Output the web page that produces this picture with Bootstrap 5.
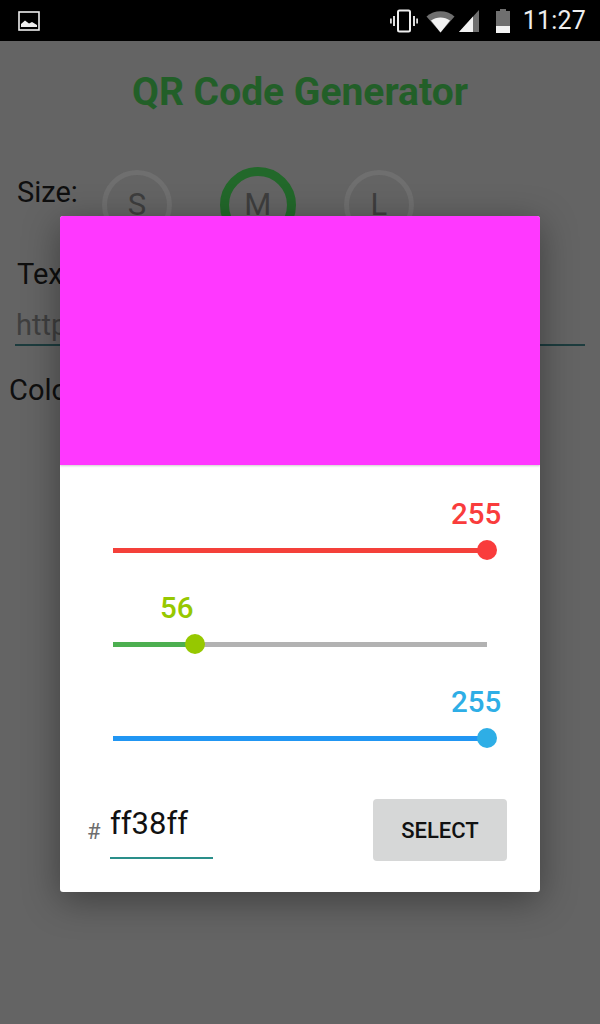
<!DOCTYPE html>
<html lang="en">
<head>
  <meta charset="UTF-8">
  <meta name="viewport" content="width=device-width, initial-scale=1.0">
  <title>QR Code Generator</title>
  <link href="https://cdn.jsdelivr.net/npm/bootstrap@5.3.3/dist/css/bootstrap.min.css" rel="stylesheet">
  <style>
    body { background: #646464; font-family: Roboto, sans-serif; width: 600px; height: 1024px; overflow: hidden; position: relative; }
    .status-bar { height: 41px; background: #000; color: #eee; padding: 0 14px 0 18px; font-size: 25px; }
    .status-time { line-height: 1; margin-left: 13px; letter-spacing: .2px; }
    .page-title { color: #225f28; font-size: 39px; font-weight: 700; line-height: 46px; margin: 28px 0 0; text-align: center; }
    .dim-label { color: #0f0f0f; font-size: 29px; line-height: 34px; }
    .size-row { padding: 52px 0 0 17px; height: 137px; }
    .size-dot { display: flex; align-items: center; justify-content: center; border-radius: 50%; color: #3e3e3e; font-size: 31px; flex: none; }
    .size-off { width: 70px; height: 70px; border: 5px solid #6f6f6f; }
    .size-on { width: 76px; height: 76px; border: 9px solid #22682a; }
    .text-label { padding: 0 0 0 17px; margin-top: 5px; }
    .text-field { margin: 16px 15px 0; padding-left: 1px; height: 37px; border-bottom: 2px solid #1d3c3e; color: #3f3f3f; font-size: 29px; line-height: 36px; box-sizing: content-box; }
    .color-label { padding-left: 9px; margin-top: 27px; }
    .picker { position: absolute; left: 60px; top: 216px; width: 480px; height: 676px; background: #fff; border: 0; border-radius: 3px; box-shadow: 0 8px 36px rgba(0,0,0,.38); overflow: hidden; }
    .swatch { height: 249px; background: #ff38ff; box-shadow: 0 1px 2px rgba(0,0,0,.2); }
    .sliders { padding: 29px 53px 0; }
    .slider-row { height: 94px; }
    .slider-value { font-size: 29.5px; line-height: 40px; font-weight: 500; height: 40px; margin-left: -10px; }
    .slider-track { height: 5px; background: #b2b2b2; border-radius: 0; overflow: visible; margin-top: 14px; width: 374px; position: relative; }
    .slider-thumb { position: absolute; top: -8px; width: 20px; height: 20px; margin-left: -10px; border-radius: 50%; }
    .hex-row { padding: 0 33px 0 27px; height: 62px; margin-top: 23px; }
    .hex-hash { color: #6e6e6e; font-size: 22px; width: 23px; padding-top: 2px; }
    .hex-field { width: 103px; height: 59px; border-bottom: 2px solid #2a8f8a; font-size: 31px; line-height: 52px; color: #111; box-sizing: content-box; margin-top: -1px; }
    .select-btn { width: 134px; height: 62px; padding: 0; background: #d6d7d7; border: 0; border-radius: 4px; color: #111; font-size: 22px; font-weight: 500; }
    .select-btn:hover { background: #d6d7d7; color: #111; }
  </style>
</head>
<body>

  <div class="status-bar d-flex align-items-center">
    <svg width="22" height="20" viewBox="0 0 22 20">
      <rect x="1" y="1" width="20" height="18" fill="none" stroke="#eee" stroke-width="1.6"/>
      <path d="M3 16 L3 13 L7 9.5 L11 12.5 L14 11 L19 14 L19 16 Z" fill="#eee"/>
    </svg>
    <div class="ms-auto d-flex align-items-center">
      <svg width="28" height="24" viewBox="0 0 28 24">
        <rect x="8" y="1.5" width="12" height="21" rx="1.5" fill="none" stroke="#eee" stroke-width="2"/>
        <path d="M4 7v10M0.8 9.5v5M24 7v10M27.2 9.5v5" stroke="#ddd" stroke-width="2" fill="none"/>
      </svg>
      <svg class="ms-2" width="29" height="24" viewBox="0 0 29 24">
        <path d="M0.5 7.5 C8 0.5 21 0.5 28.5 7.5 L14.5 23.5 Z" fill="#6f6f6f"/>
        <path d="M5 11.5 C10.5 7.5 18.5 7.5 24 11.5 L14.5 23.5 Z" fill="#f2f2f2"/>
      </svg>
      <svg class="ms-1" width="21" height="24" viewBox="0 0 21 24">
        <path d="M0 23 L20 1 L20 23 Z" fill="#6f6f6f"/>
        <path d="M0 23 L14 7.5 L14 23 Z" fill="#f2f2f2"/>
      </svg>
      <svg class="ms-3" width="14" height="24" viewBox="0 0 14 24">
        <path d="M4 0h6v2h4v22H0V2h4z" fill="#6f6f6f"/>
        <rect y="17" width="14" height="7" fill="#f2f2f2"/>
      </svg>
      <span class="status-time">11:27</span>
    </div>
  </div>

  <h1 class="page-title">QR Code Generator</h1>

  <div class="size-row d-flex align-items-start">
    <span class="dim-label mt-2 me-4" style="margin-top:10px">Size:</span>
    <div class="d-flex align-items-center">
      <div class="size-dot size-off">S</div>
      <div class="size-dot size-on ms-5">M</div>
      <div class="size-dot size-off ms-5">L</div>
    </div>
  </div>

  <div class="dim-label text-label">Text:</div>
  <div class="text-field">http</div>
  <div class="dim-label color-label">Color:</div>

  <div class="picker">
    <div class="swatch"></div>
    <div class="sliders" id="sliders"></div>
    <div class="hex-row d-flex align-items-start">
      <span class="hex-hash align-self-center">#</span>
      <div class="hex-field">ff38ff</div>
      <button type="button" class="btn select-btn ms-auto">SELECT</button>
    </div>
  </div>

  <script src="https://cdn.jsdelivr.net/npm/bootstrap@5.3.3/dist/js/bootstrap.bundle.min.js"></script>
  <script>
    const canais = [
      { valor: 255, texto: '#f93c3c', barra: '#f4403a', fundo: '#f4403a', rotulo: 348 },
      { valor: 56, texto: '#96c800', barra: '#4caf50', fundo: '#b2b2b2', rotulo: 57 },
      { valor: 255, texto: '#2eaee6', barra: '#2196f3', fundo: '#2196f3', rotulo: 348 }
    ];

    document.getElementById('sliders').innerHTML = canais.map(c => {
      const pct = c.valor / 255 * 100;
      return `
        <div class="slider-row">
          <div class="slider-value" style="color:${c.texto};padding-left:${c.rotulo}px">${c.valor}</div>
          <div class="slider-track progress" style="background:${c.fundo}">
            <div class="progress-bar" style="width:${pct}%;background:${c.barra}"></div>
            <div class="slider-thumb" style="left:${pct}%;background:${c.texto}"></div>
          </div>
        </div>`;
    }).join('');
  </script>
</body>
</html>
